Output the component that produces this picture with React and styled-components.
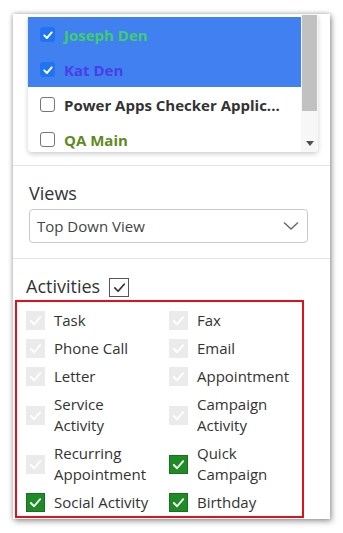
import styled, { createGlobalStyle } from 'styled-components';

const GlobalStyle = createGlobalStyle`
  body {
    margin: 0;
    background: #ffffff;
    font-family: 'Open Sans', 'Liberation Sans', sans-serif;
  }
`;

const Page = styled.div`
  padding: 14px 13px;
`;

const Card = styled.div`
  width: 317px;
  height: 505px;
  background: #ffffff;
  overflow: hidden;
  box-shadow: 0 0 5px rgba(0, 0, 0, 0.35), 2px 3px 6px rgba(0, 0, 0, 0.25);
`;

const ListSection = styled.div`
  padding: 1px 12px 13px 15px;
`;

const ListBox = styled.div`
  display: flex;
  height: 137px;
  overflow: hidden;
  background: #ffffff;
  border-radius: 0 0 4px 4px;
  box-shadow: 0 2px 5px rgba(0, 0, 0, 0.2);
`;

const Rows = styled.div`
  flex: 1;
  min-width: 0;
  padding-top: 2px;
`;

const Row = styled.div`
  display: flex;
  align-items: center;
  gap: 9px;
  height: 35px;
  padding: 0 12px 0 12px;
  background: ${(p) => (p.$selected ? '#4080f0' : 'transparent')};
`;

const RowText = styled.span`
  font-size: 15px;
  font-weight: 700;
  color: ${(p) => p.$color};
  white-space: nowrap;
`;

const SmallBox = styled.span`
  flex: none;
  display: flex;
  align-items: center;
  justify-content: center;
  width: 15px;
  height: 15px;
  box-sizing: border-box;
  border-radius: 3px;
  background: ${(p) => (p.$checked ? '#1f74f2' : '#ffffff')};
  border: ${(p) => (p.$checked ? 'none' : '1.5px solid #767676')};
`;

const Scrollbar = styled.div`
  width: 17px;
  display: flex;
  flex-direction: column;
  background: #f7f7f7;
`;

const Thumb = styled.div`
  height: 96px;
  margin: 0 1px;
  background: #c1c1c1;
`;

const ArrowSlot = styled.div`
  flex: 1;
  display: flex;
  align-items: flex-end;
  justify-content: center;
  padding-bottom: 6px;
`;

const Section = styled.div`
  border-top: 1px solid #e4e4e4;
  padding: ${(p) => p.$pad};
`;

const Label = styled.div`
  font-size: 18px;
  line-height: 24px;
  color: #333333;
`;

const Select = styled.div`
  display: flex;
  align-items: center;
  justify-content: space-between;
  margin-top: 4px;
  height: 34px;
  box-sizing: border-box;
  border: 1px solid #c9c9c9;
  border-radius: 4px;
  padding: 0 8px 0 7px;
  font-size: 15px;
  color: #444444;
`;

const Header = styled.div`
  display: flex;
  align-items: center;
  gap: 9px;
  padding-left: 11px;
`;

const HeaderBox = styled.span`
  display: flex;
  align-items: center;
  justify-content: center;
  width: 20px;
  height: 19px;
  box-sizing: border-box;
  border: 1px solid #555555;
  margin-top: 2px;
`;

const Framed = styled.div`
  margin-top: 2px;
  width: 289px;
  box-sizing: border-box;
  border: 2px solid #e3101c;
  padding: 8px 0 3px 9px;
  display: grid;
  grid-template-columns: 143px 1fr;
  row-gap: 7px;
`;

const Item = styled.div`
  display: flex;
  align-items: center;
  gap: 9px;
  font-size: 15px;
  line-height: 21px;
  color: #333333;
`;

const ItemText = styled.span`
  max-width: 97px;
`;

const Box = styled.span`
  flex: none;
  display: flex;
  align-items: center;
  justify-content: center;
  width: 19px;
  height: 19px;
  box-sizing: border-box;
  background: ${(p) => (p.$checked ? '#1f8b26' : '#ebebeb')};
  border: ${(p) => (p.$checked ? '1px solid #16701d' : 'none')};
`;

const Check = ({ size = 14, color = '#fff', width = 2 }) => (
  <svg width={size} height={size} viewBox="0 0 16 16" fill="none">
    <polyline
      points="3,8.5 6.5,12 13,4.5"
      stroke={color}
      strokeWidth={width}
      strokeLinecap="round"
      strokeLinejoin="round"
    />
  </svg>
);

const users = [
  { name: 'Joseph Den', color: '#3fcf6a', checked: true },
  { name: 'Kat Den', color: '#4a3ee6', checked: true },
  { name: 'Power Apps Checker Applic...', color: '#333333', checked: false },
  { name: 'QA Main', color: '#5f8a1f', checked: false },
];

const activities = [
  ['Task', false],
  ['Fax', false],
  ['Phone Call', false],
  ['Email', false],
  ['Letter', false],
  ['Appointment', false],
  ['Service Activity', false],
  ['Campaign Activity', false],
  ['Recurring Appointment', false],
  ['Quick Campaign', true],
  ['Social Activity', true],
  ['Birthday', true],
];

export default function App() {
  return (
    <Page>
      <GlobalStyle />
      <Card>
        <ListSection>
          <ListBox>
            <Rows>
              {users.map((u) => (
                <Row key={u.name} $selected={u.checked}>
                  <SmallBox $checked={u.checked}>
                    {u.checked && <Check size={12} width={2.6} />}
                  </SmallBox>
                  <RowText $color={u.color}>{u.name}</RowText>
                </Row>
              ))}
            </Rows>
            <Scrollbar>
              <Thumb />
              <ArrowSlot>
                <svg width="8" height="5" viewBox="0 0 8 5">
                  <polygon points="0,0 8,0 4,5" fill="#505050" />
                </svg>
              </ArrowSlot>
            </Scrollbar>
          </ListBox>
        </ListSection>

        <Section $pad="15px 22px 15px 16px">
          <Label>Views</Label>
          <Select>
            <span>Top Down View</span>
            <svg width="16" height="10" viewBox="0 0 16 10" fill="none">
              <polyline points="1,1.5 8,8 15,1.5" stroke="#6a6a6a" strokeWidth="1.5" />
            </svg>
          </Select>
        </Section>

        <Section $pad="15px 0 0 2px">
          <Header>
            <Label>Activities</Label>
            <HeaderBox>
              <Check size={15} color="#333" width={1.8} />
            </HeaderBox>
          </Header>
          <Framed>
            {activities.map(([name, checked]) => (
              <Item key={name}>
                <Box $checked={checked}>
                  <Check size={15} />
                </Box>
                <ItemText>{name}</ItemText>
              </Item>
            ))}
          </Framed>
        </Section>
      </Card>
    </Page>
  );
}
